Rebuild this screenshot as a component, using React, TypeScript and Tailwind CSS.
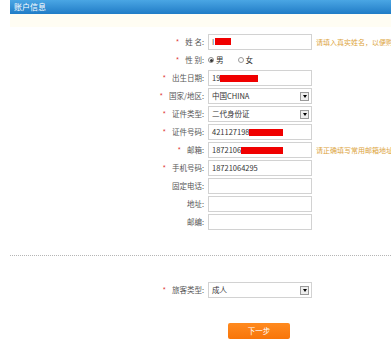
import React from "react";

const font = { fontFamily: '"Noto Sans CJK SC", "Noto Sans", sans-serif' };

function Label({ star, text }: { star?: boolean; text: string }) {
  return (
    <div className="w-[194px] shrink-0 text-right text-[7.5px] leading-[16px] text-[#555] whitespace-pre">
      {star && <span className="text-[#e03a3a] mr-[6px]">*</span>}
      {text}
    </div>
  );
}

function Box({ children, select }: { children?: React.ReactNode; select?: boolean }) {
  return (
    <div className="ml-[4px] w-[104px] h-[16px] shrink-0 border border-[#d2d2d2] bg-white flex items-center pl-[3px] pr-[2px] text-[7.5px] text-[#333] whitespace-nowrap overflow-hidden">
      <div className="flex-1 flex items-center">{children}</div>
      {select && (
        <div className="w-[9px] h-[9px] border border-[#9a9a9a] bg-[#eee] flex items-center justify-center">
          <div className="w-0 h-0 border-l-[2.5px] border-r-[2.5px] border-t-[3px] border-l-transparent border-r-transparent border-t-black" />
        </div>
      )}
    </div>
  );
}

function Red({ w }: { w: number }) {
  return <span className="inline-block h-[7px] bg-[#f00000]" style={{ width: w }} />;
}

function Hint({ text }: { text: string }) {
  return <div className="ml-[4px] text-[7px] leading-[16px] text-[#dca43c] whitespace-nowrap">{text}</div>;
}

function Row({ children }: { children: React.ReactNode }) {
  return <div className="flex items-center h-[16px]">{children}</div>;
}

export default function App() {
  return (
    <div className="w-[391px] h-[349px] bg-white overflow-hidden relative" style={font}>
      <div className="pl-[10px]">
        <div className="h-[14px] bg-gradient-to-b from-[#4aa6e4] to-[#1f7cc6] text-white text-[8px] leading-[14px] pl-[4px]">
          账户信息
        </div>
        <div className="h-[13px] bg-[#fffdf3]" />
      </div>
      <div className="pl-[10px] pt-[7px] flex flex-col gap-[2px]">
        <Row>
          <Label star text={"姓 名:"} />
          <Box>
            <span className="text-[#555]">I</span>
            <span className="ml-[1px]"><Red w={16} /></span>
          </Box>
          <Hint text="请填入真实姓名，以便购买" />
        </Row>
        <Row>
          <Label star text={"性 别:"} />
          <div className="ml-[4px] flex items-center text-[7.5px] text-[#333]">
            <span className="w-[6px] h-[6px] rounded-full border border-[#8a8a8a] bg-white flex items-center justify-center">
              <span className="w-[3px] h-[3px] rounded-full bg-[#333]" />
            </span>
            <span className="ml-[2px]">男</span>
            <span className="ml-[14px] w-[6px] h-[6px] rounded-full border border-[#9a9a9a] bg-white" />
            <span className="ml-[2px]">女</span>
          </div>
        </Row>
        <Row>
          <Label star text={"出生日期:"} />
          <Box>
            <span>19</span>
            <Red w={38} />
          </Box>
        </Row>
        <Row>
          <Label star text={"国家/地区:"} />
          <Box select>中国CHINA</Box>
        </Row>
        <Row>
          <Label star text={"证件类型:"} />
          <Box select>二代身份证</Box>
        </Row>
        <Row>
          <Label star text={"证件号码:"} />
          <Box>
            <span>421127198</span>
            <Red w={34} />
          </Box>
        </Row>
        <Row>
          <Label star text={"邮箱:"} />
          <Box>
            <span>1872106</span>
            <Red w={42} />
          </Box>
          <Hint text="请正确填写常用邮箱地址，!" />
        </Row>
        <Row>
          <Label star text={"手机号码:"} />
          <Box>18721064295</Box>
        </Row>
        <Row>
          <Label text={"固定电话:"} />
          <Box />
        </Row>
        <Row>
          <Label text={"地址:"} />
          <Box />
        </Row>
        <Row>
          <Label text={"邮编:"} />
          <Box />
        </Row>
      </div>
      <div className="ml-[10px] mt-[25px] border-t border-dotted border-[#b5b5b5]" />
      <div className="pl-[10px] mt-[26px]">
        <Row>
          <Label star text={"旅客类型:"} />
          <Box select>成人</Box>
        </Row>
      </div>
      <div className="mt-[25px] ml-[228px] w-[62px] h-[16px] rounded-[2px] bg-gradient-to-b from-[#ff8a1e] to-[#f87508] text-white text-[7.5px] leading-[16px] text-center">
        下一步
      </div>
    </div>
  );
}
